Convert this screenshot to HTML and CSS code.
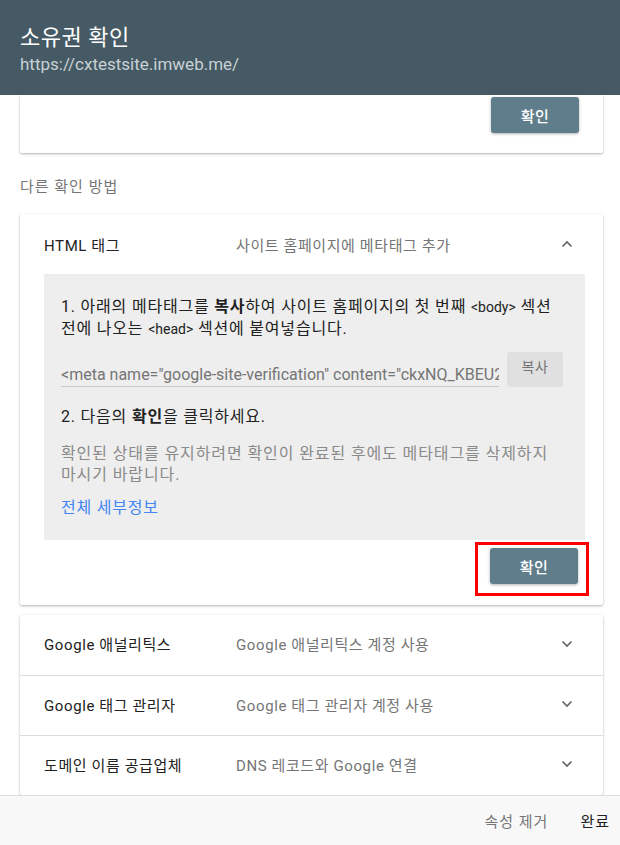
FILE: index.html
```html
<!DOCTYPE html>
<html lang="ko">
<head>
<meta charset="utf-8">
<title>소유권 확인</title>
<link rel="stylesheet" href="styles.css">
</head>
<body>
<div class="dialog">
  <header class="head">
    <div class="title">소유권 확인</div>
    <div class="url">https://cxtestsite.imweb.me/</div>
  </header>
  <main class="scroll">
    <section class="card card-top">
      <div class="actions"><button class="btn">확인</button></div>
    </section>
    <div class="section-label">다른 확인 방법</div>
    <section class="card">
      <div class="row">
        <div class="row-title">HTML 태그</div>
        <div class="row-desc">사이트 홈페이지에 메타태그 추가</div>
        <svg class="chev" width="12" height="8" viewBox="0 0 12 8"><path d="M1.5 6.5 L6 2 L10.5 6.5" fill="none" stroke="#666" stroke-width="1.7"/></svg>
      </div>
      <div class="panel">
        <p class="step">1. 아래의 메타태그를 <b>복사</b>하여 사이트 홈페이지의 첫 번째 <span class="tag">&lt;body&gt;</span> 섹션 전에 나오는 <span class="tag">&lt;head&gt;</span> 섹션에 붙여넣습니다.</p>
        <div class="copy-row">
          <div class="field">&lt;meta name="google-site-verification" content="ckxNQ_KBEU2wX3f0pLh4a" /&gt;</div>
          <button class="copy">복사</button>
        </div>
        <p class="step step2">2. 다음의 <b>확인</b>을 클릭하세요.</p>
        <p class="hint">확인된 상태를 유지하려면 확인이 완료된 후에도 메타태그를 삭제하지 마시기 바랍니다.</p>
        <a class="link" href="#">전체 세부정보</a>
      </div>
      <div class="actions actions-main">
        <div class="highlight"><button class="btn">확인</button></div>
      </div>
    </section>
    <section class="card list">
      <div class="row">
        <div class="row-title">Google 애널리틱스</div>
        <div class="row-desc">Google 애널리틱스 계정 사용</div>
        <svg class="chev" width="12" height="8" viewBox="0 0 12 8"><path d="M1.5 1.5 L6 6 L10.5 1.5" fill="none" stroke="#666" stroke-width="1.7"/></svg>
      </div>
      <div class="row">
        <div class="row-title">Google 태그 관리자</div>
        <div class="row-desc">Google 태그 관리자 계정 사용</div>
        <svg class="chev" width="12" height="8" viewBox="0 0 12 8"><path d="M1.5 1.5 L6 6 L10.5 1.5" fill="none" stroke="#666" stroke-width="1.7"/></svg>
      </div>
      <div class="row">
        <div class="row-title">도메인 이름 공급업체</div>
        <div class="row-desc">DNS 레코드와 Google 연결</div>
        <svg class="chev" width="12" height="8" viewBox="0 0 12 8"><path d="M1.5 1.5 L6 6 L10.5 1.5" fill="none" stroke="#666" stroke-width="1.7"/></svg>
      </div>
    </section>
  </main>
  <footer class="foot">
    <button class="text-btn muted">속성 제거</button>
    <button class="text-btn">완료</button>
  </footer>
</div>
</body>
</html>
```
FILE: styles.css
```css
* { box-sizing: border-box; }
html, body { margin: 0; padding: 0; }
body {
  width: 620px;
  height: 845px;
  overflow: hidden;
  background: #fff;
  font-family: Roboto, "Noto Sans CJK KR", sans-serif;
  color: #212121;
}
.dialog {
  display: flex;
  flex-direction: column;
  height: 845px;
}
.head {
  height: 95px;
  flex: none;
  background: #455a64;
  padding: 24px 20px 0;
  color: #fff;
}
.title {
  font-size: 22px;
  line-height: 28px;
  letter-spacing: 0.5px;
}
.url {
  font-size: 17px;
  line-height: 22px;
  color: #c9d1d5;
  margin-top: 1px;
}
.scroll {
  flex: 1;
  overflow: hidden;
  padding: 0 17px 0 20px;
}
.card {
  background: #fff;
  border-radius: 2px;
  box-shadow: 0 1px 3px rgba(0,0,0,0.25), 0 1px 1px rgba(0,0,0,0.08);
}
.card-top {
  border-radius: 0 0 2px 2px;
  padding: 2px 24px 20px;
}
.actions {
  display: flex;
  justify-content: flex-end;
}
.btn {
  width: 88px;
  height: 36px;
  border: 0;
  border-radius: 3px;
  background: #607d8b;
  color: #fff;
  font: 500 15px Roboto, "Noto Sans CJK KR", sans-serif;
  letter-spacing: 0.5px;
  box-shadow: 0 1px 3px rgba(0,0,0,0.3);
  padding: 0;
}
.section-label {
  font-size: 15px;
  line-height: 20px;
  letter-spacing: 1px;
  color: #757575;
  padding: 24px 0 17px;
}
.row {
  display: flex;
  align-items: center;
  height: 60px;
  padding: 0 30px 0 24px;
  font-size: 15px;
  letter-spacing: 0.6px;
}
.row-title {
  width: 192px;
  flex: none;
  color: #212121;
}
.row-desc {
  flex: 1;
  color: #757575;
}
.chev { flex: none; }
.panel {
  margin: 0 18px 0 24px;
  background: #eeeeee;
  padding: 22px 22px 21px 17px;
}
.step {
  margin: 0;
  font-size: 16px;
  line-height: 21px;
  letter-spacing: 0.8px;
  color: #212121;
}
.step b { font-weight: 700; }
.tag {
  font-size: 14px;
  letter-spacing: 0;
}
.copy-row {
  display: flex;
  align-items: flex-end;
  gap: 8px;
  margin-top: 12px;
}
.field {
  flex: 1;
  min-width: 0;
  white-space: nowrap;
  overflow: hidden;
  font-size: 16px;
  line-height: 22px;
  color: #757575;
  border-bottom: 1px solid #c8c8c8;
  padding-top: 2px;
}
.copy {
  width: 56px;
  height: 35px;
  border: 0;
  border-radius: 3px;
  background: #e0e0e0;
  color: #757575;
  font: 14px Roboto, "Noto Sans CJK KR", sans-serif;
  letter-spacing: 0.6px;
  padding: 0 0 8px;
}
.step2 { margin-top: 19px; }
.hint {
  margin: 16px 0 0;
  font-size: 16px;
  line-height: 21px;
  letter-spacing: 0.9px;
  color: #8a8a8a;
}
.link {
  display: block;
  margin-top: 12px;
  font-size: 16px;
  line-height: 22px;
  letter-spacing: 0.8px;
  color: #4285f4;
  text-decoration: none;
}
.actions-main {
  padding: 2px 14px 9px 0;
}
.highlight {
  border: 3px solid #ff0000;
  padding: 3px 8px 9px 12px;
}
.list {
  margin-top: 10px;
}
.list .row {
  padding-bottom: 3px;
}
.list .row + .row {
  border-top: 1px solid #dcdcdc;
}
.foot {
  height: 50px;
  flex: none;
  background: #f8f8f8;
  border-top: 1px solid #dedede;
  display: flex;
  justify-content: flex-end;
  align-items: center;
  padding-right: 4px;
}
.text-btn {
  background: none;
  border: 0;
  font: 15px Roboto, "Noto Sans CJK KR", sans-serif;
  letter-spacing: 1px;
  color: #212121;
  padding: 0 6px;
  height: 36px;
}
.text-btn.muted {
  color: #757575;
  margin-right: 20px;
}
```
